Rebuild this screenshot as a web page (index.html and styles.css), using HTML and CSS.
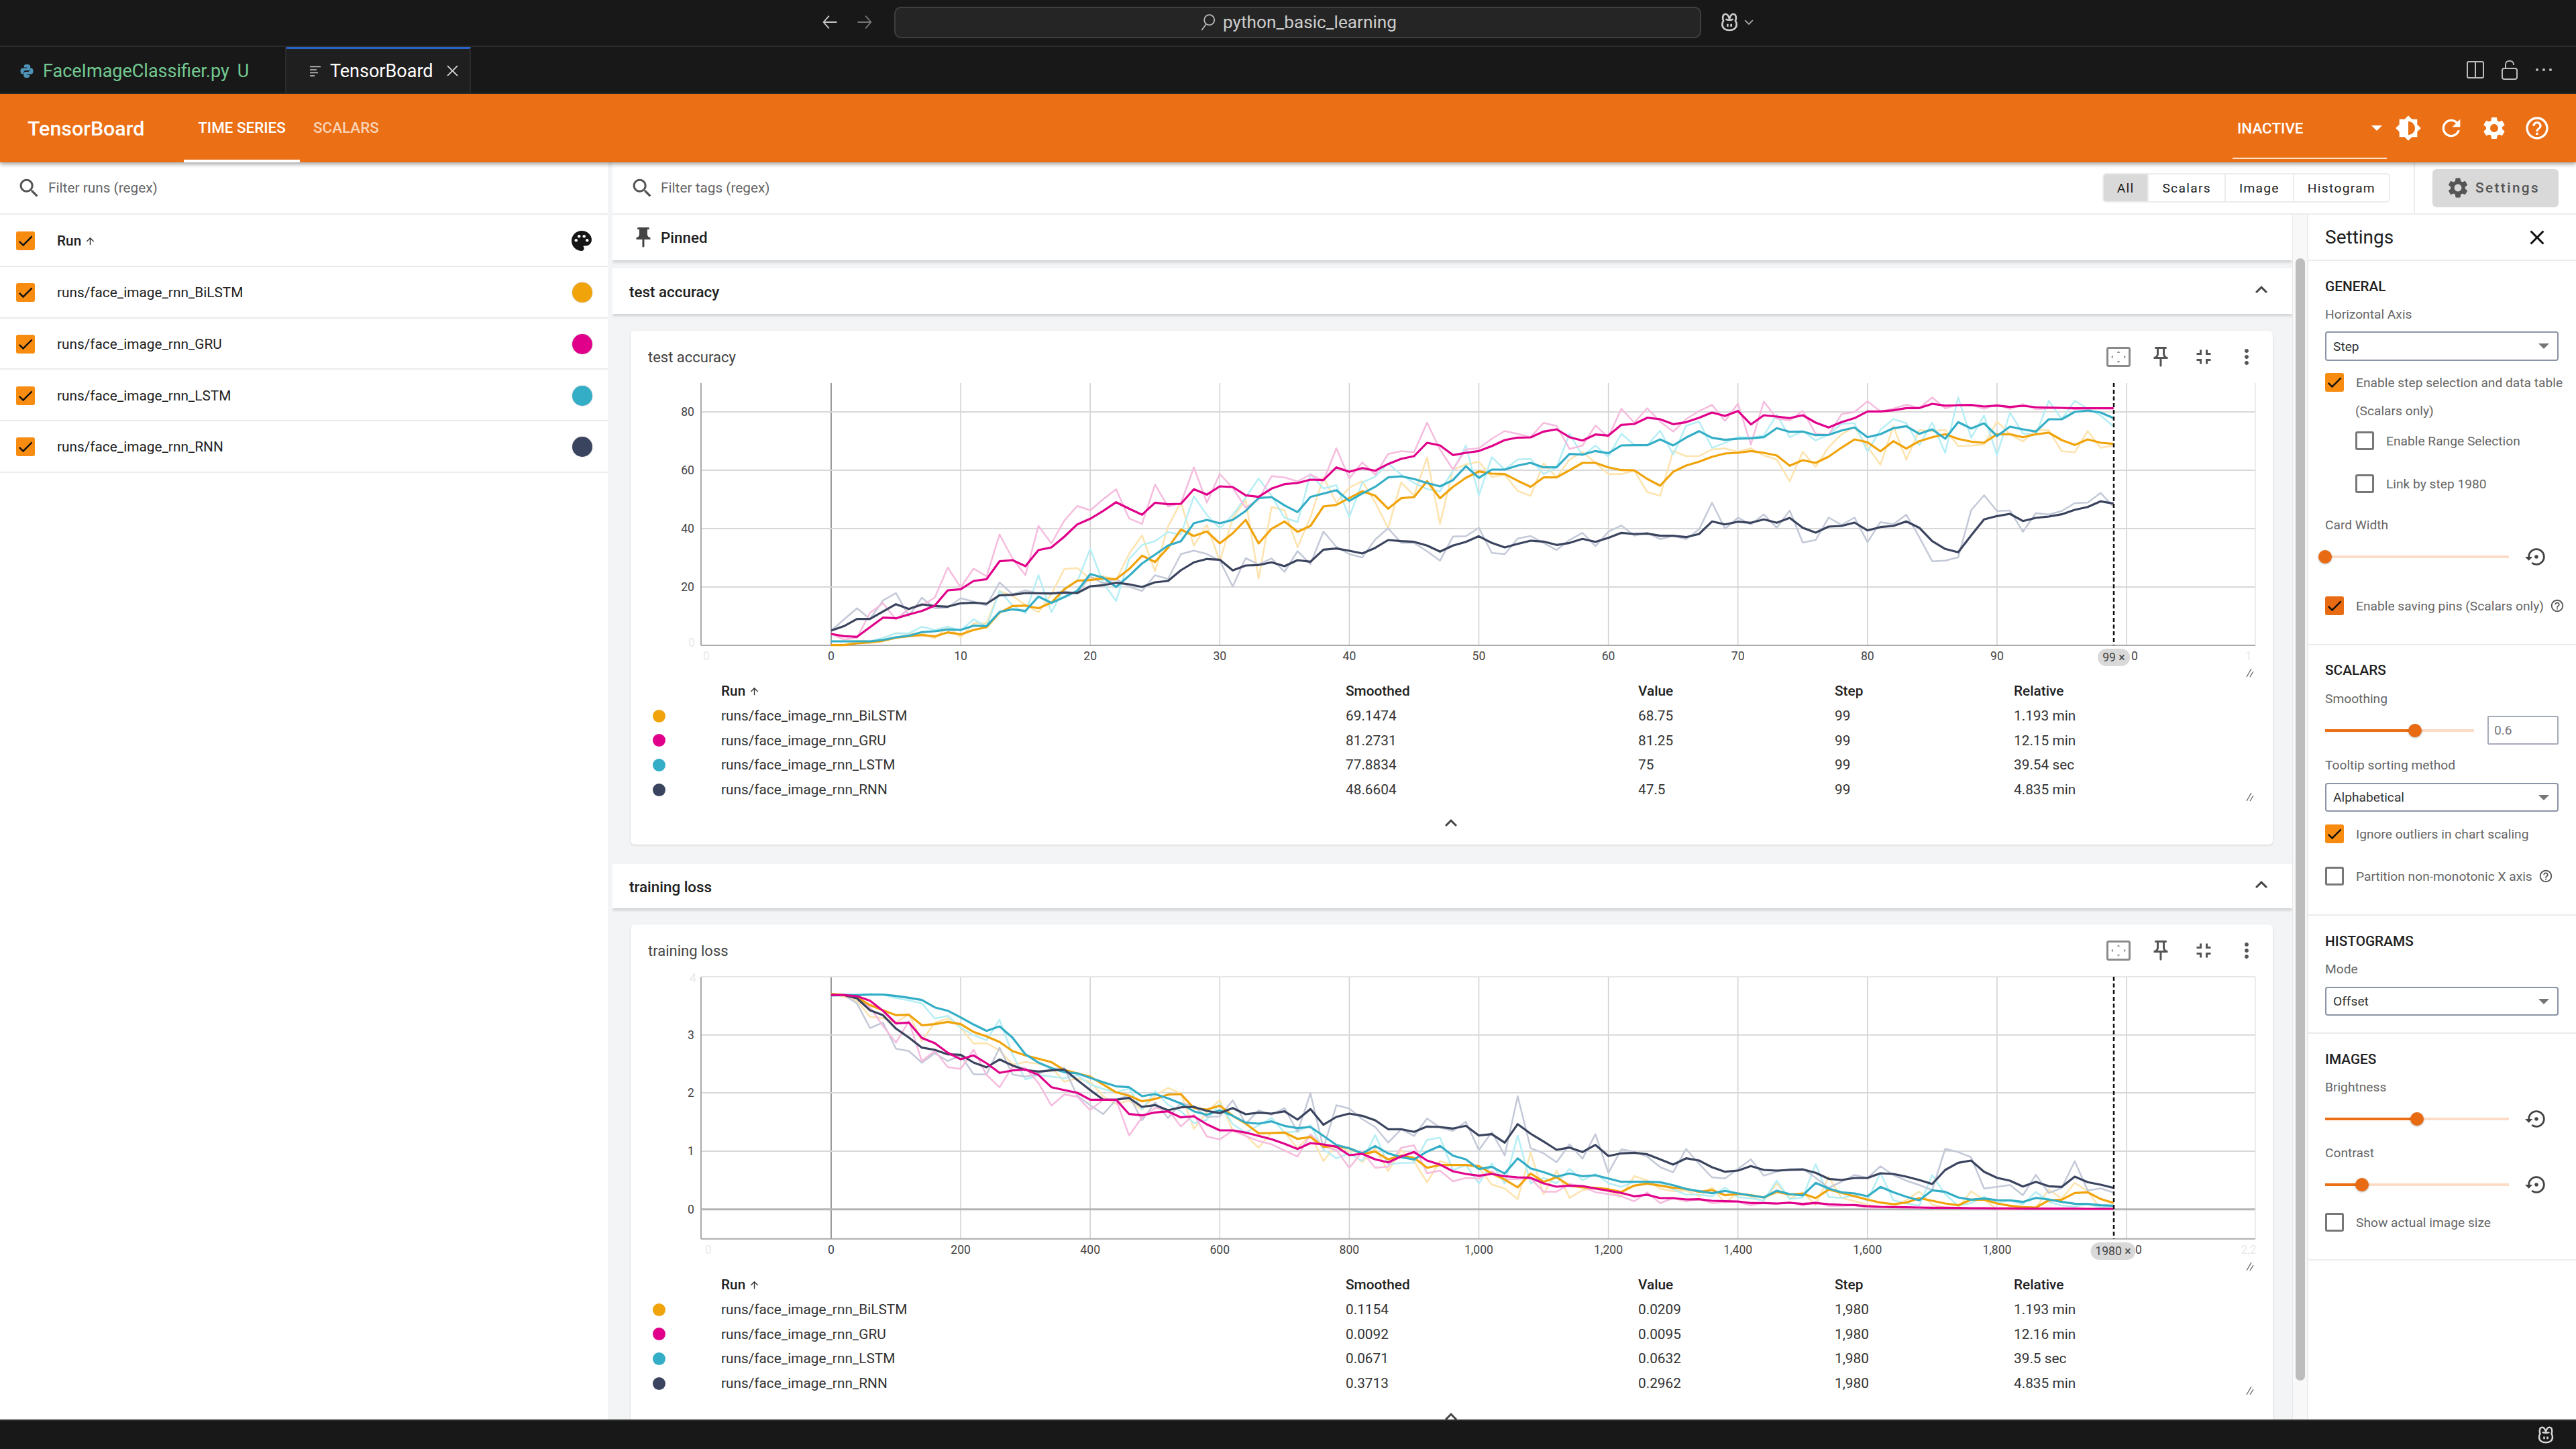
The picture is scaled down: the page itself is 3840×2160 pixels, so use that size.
FILE: index.html
```html
<!DOCTYPE html>
<html>
<head>
    <meta charset="utf-8">
    <title>TensorBoard</title>
    <link rel="stylesheet" href="styles.css">
</head>
<body>
    <svg class="defs" width="0" height="0">
        <symbol id="i-search" viewBox="0 0 24 24"><path d="M15.5 14h-.79l-.28-.27C15.41 12.59 16 11.11 16 9.5 16 5.91 13.09 3 9.5 3S3 5.91 3 9.5 5.91 16 9.5 16c1.61 0 3.09-.59 4.23-1.57l.27.28v.79l5 4.99L20.49 19l-4.99-5zm-6 0C7.01 14 5 11.99 5 9.5S7.01 5 9.5 5 14 7.01 14 9.5 11.99 14 9.5 14z"/></symbol>
        <symbol id="i-gear" viewBox="0 0 24 24"><path d="M19.14 12.94c.04-.3.06-.61.06-.94 0-.32-.02-.64-.07-.94l2.03-1.58c.18-.14.23-.41.12-.61l-1.92-3.32c-.12-.22-.37-.29-.59-.22l-2.39.96c-.5-.38-1.03-.7-1.62-.94l-.36-2.54c-.04-.24-.24-.41-.48-.41h-3.84c-.24 0-.43.17-.47.41l-.36 2.54c-.59.24-1.13.57-1.62.94l-2.39-.96c-.22-.08-.47 0-.59.22L2.74 8.87c-.12.21-.08.47.12.61l2.03 1.58c-.05.3-.09.63-.09.94s.02.64.07.94l-2.03 1.58c-.18.14-.23.41-.12.61l1.92 3.32c.12.22.37.29.59.22l2.39-.96c.5.38 1.03.7 1.62.94l.36 2.54c.05.24.24.41.48.41h3.84c.24 0 .44-.17.47-.41l.36-2.54c.59-.24 1.13-.56 1.62-.94l2.39.96c.22.08.47 0 .59-.22l1.92-3.32c.12-.22.07-.47-.12-.61l-2.01-1.58zM12 15.6c-1.98 0-3.6-1.62-3.6-3.6s1.62-3.6 3.6-3.6 3.6 1.62 3.6 3.6-1.62 3.6-3.6 3.6z"/></symbol>
        <symbol id="i-help" viewBox="0 0 24 24"><path d="M11 18h2v-2h-2v2zm1-16C6.48 2 2 6.48 2 12s4.48 10 10 10 10-4.48 10-10S17.52 2 12 2zm0 18c-4.41 0-8-3.59-8-8s3.59-8 8-8 8 3.59 8 8-3.59 8-8 8zm0-14c-2.21 0-4 1.79-4 4h2c0-1.1.9-2 2-2s2 .9 2 2c0 2-3 1.75-3 5h2c0-2.25 3-2.5 3-5 0-2.21-1.79-4-4-4z"/></symbol>
        <symbol id="i-refresh" viewBox="0 0 24 24"><path d="M17.65 6.35C16.2 4.9 14.21 4 12 4c-4.42 0-7.99 3.58-7.99 8s3.57 8 7.99 8c3.73 0 6.84-2.55 7.73-6h-2.08c-.82 2.33-3.04 4-5.65 4-3.31 0-6-2.69-6-6s2.69-6 6-6c1.66 0 3.14.69 4.22 1.78L13 11h7V4l-2.35 2.35z"/></symbol>
        <symbol id="i-theme" viewBox="0 0 24 24"><path d="M20 15.31L23.31 12 20 8.69V4h-4.69L12 .69 8.69 4H4v4.69L.69 12 4 15.31V20h4.69L12 23.31 15.31 20H20v-4.69zM12 18V6c3.31 0 6 2.69 6 6s-2.69 6-6 6z"/></symbol>
        <symbol id="i-palette" viewBox="0 0 24 24"><path d="M12 2C6.49 2 2 6.49 2 12s4.49 10 10 10c1.38 0 2.5-1.12 2.5-2.5 0-.61-.23-1.2-.64-1.67-.08-.1-.13-.21-.13-.33 0-.28.22-.5.5-.5H16c3.31 0 6-2.69 6-6 0-4.96-4.49-9-10-9zM6.5 13c-.83 0-1.5-.67-1.5-1.5S5.67 10 6.5 10s1.5.67 1.5 1.5S7.33 13 6.5 13zm3-4C8.67 9 8 8.33 8 7.5S8.67 6 9.5 6s1.5.67 1.5 1.5S10.33 9 9.5 9zm5 0c-.83 0-1.5-.67-1.5-1.5S13.67 6 14.5 6s1.5.67 1.5 1.5S15.33 9 14.5 9zm3 4c-.83 0-1.5-.67-1.5-1.5s.67-1.5 1.5-1.5 1.5.67 1.5 1.5-.67 1.5-1.5 1.5z"/></symbol>
        <symbol id="i-pin" viewBox="0 0 24 24"><path d="M16 9V4h1c.55 0 1-.45 1-1s-.45-1-1-1H7c-.55 0-1 .45-1 1s.45 1 1 1h1v5c0 1.66-1.34 3-3 3v2h5.97v7l1 1 1-1v-7H19v-2c-1.66 0-3-1.34-3-3z"/></symbol>
        <symbol id="i-pin-line" viewBox="0 0 24 24"><path d="M14 4v5c0 1.12.37 2.16 1 3H9c.65-.86 1-1.9 1-3V4h4m3-2H7c-.55 0-1 .45-1 1s.45 1 1 1h1v5c0 1.66-1.34 3-3 3v2h5.97v7l1 1 1-1v-7H19v-2c-1.66 0-3-1.34-3-3V4h1c.55 0 1-.45 1-1s-.45-1-1-1z"/></symbol>
        <symbol id="i-reset" viewBox="0 0 24 24"><path d="M14 12c0-1.1-.9-2-2-2s-2 .9-2 2 .9 2 2 2 2-.9 2-2zm-2-9c-4.97 0-9 4.03-9 9H0l4 4 4-4H5c0-3.87 3.13-7 7-7s7 3.13 7 7-3.13 7-7 7c-1.51 0-2.91-.49-4.06-1.3l-1.42 1.44C8.04 20.3 9.94 21 12 21c4.97 0 9-4.03 9-9s-4.03-9-9-9z"/></symbol>
        <symbol id="i-close" viewBox="0 0 24 24"><path d="M19 6.41L17.59 5 12 10.59 6.41 5 5 6.41 10.59 12 5 17.59 6.41 19 12 13.41 17.59 19 19 17.59 13.41 12 19 6.41z"/></symbol>
        <symbol id="i-up" viewBox="0 0 24 24"><path d="M12 8l-6 6 1.41 1.41L12 10.83l4.59 4.58L18 14z"/></symbol>
        <symbol id="i-more" viewBox="0 0 24 24"><path d="M12 8c1.1 0 2-.9 2-2s-.9-2-2-2-2 .9-2 2 .9 2 2 2zm0 2c-1.1 0-2 .9-2 2s.9 2 2 2 2-.9 2-2-.9-2-2-2zm0 6c-1.1 0-2 .9-2 2s.9 2 2 2 2-.9 2-2-.9-2-2-2z"/></symbol>
        <symbol id="i-collapse" viewBox="0 0 24 24"><path d="M5 16h3v3h2v-5H5v2zm3-8H5v2h5V5H8v3zm6 11h2v-3h3v-2h-5v5zm2-11V5h-2v5h5V8h-3z"/></symbol>
        <symbol id="i-fit" viewBox="0 0 36 30"><rect x="1.5" y="1.5" width="33" height="27" rx="2" fill="none" stroke="#8a8a8a" stroke-width="3"/><path d="M18 6l2.5 3h-5zM18 24l2.5-3h-5zM7 15l3-2.5v5zM29 15l-3-2.5v5z" fill="#999"/></symbol>
        <symbol id="i-arrow" viewBox="0 0 24 24"><path d="M4 12l1.41 1.41L11 7.83V20h2V7.83l5.58 5.59L20 12l-8-8-8 8z"/></symbol>
        <symbol id="i-check" viewBox="0 0 24 24"><path d="M9 16.17L4.83 12l-1.42 1.41L9 19 21 7l-1.41-1.41z"/></symbol>
        <symbol id="i-copilot" viewBox="0 0 24 24"><path d="M12 8.5C11 4.5 9.8 3 7.8 3 5.5 3 4.6 5 4.6 7.5c0 1.2.3 2.2.7 3C4.400 11.800 4 13 4 14.500 4 18.800 7.500 21 12 21s8-2.200 8-6.500c0-1.500-.4-2.700-1.300-4 .4-.8.700-1.800.700-3C19.400 5 18.500 3 16.200 3 14.200 3 13 4.500 12 8.500z" fill="none" stroke="currentColor" stroke-width="2"/><path d="M8 8.500c1 1.500 7 1.500 8 0M10 14v3M14 14v3" fill="none" stroke="currentColor" stroke-width="2"/></symbol>
    </svg>

    <header class="titlebar">
        <svg class="nav-arrow" viewBox="0 0 24 24"><path d="M21 12H4M11 4l-7 8 7 8"/></svg>
        <svg class="nav-arrow dim" viewBox="0 0 24 24"><path d="M3 12h17M13 4l7 8-7 8"/></svg>
        <div class="omnibox">
            <svg class="omni-glass" viewBox="0 0 24 24"><circle cx="14.500" cy="9" r="7"/><path d="M10 15l-6 8"/></svg>
            <span>python_basic_learning</span>
        </div>
        <svg class="copilot-top"><use href="#i-copilot"/></svg>
        <svg class="copilot-caret" viewBox="0 0 12 8"><path d="M1 1.500l5 5 5-5"/></svg>
    </header>

    <div class="tabbar">
        <div class="tab">
            <svg class="py-icon" viewBox="0 0 20 20"><path d="M9.600 1C6.600 1 6.300 2.300 6.300 3.400V5h4v.8H4.400C2.700 5.800 1.300 7 1.300 9.800c0 2.800 1.200 4.200 2.900 4.200h1.400v-2c0-1.700 1.400-3 3.100-3h3.500c1.400 0 2.500-1.100 2.500-2.500V3.400C14.700 2 13.400 1 10.800 1z"/><path d="M10.400 19c3 0 3.300-1.300 3.300-2.400V15h-4v-.8h5.900c1.700 0 3.100-1.200 3.100-4 0-2.800-1.200-4.200-2.900-4.200h-1.400v2c0 1.700-1.400 3-3.100 3H8.300c-1.400 0-2.500 1.100-2.500 2.500v3.100C5.800 18 7.100 19 9.700 19z"/></svg>
            <span class="tab-py">FaceImageClassifier.py</span>
            <span class="tab-u">U</span>
        </div>
        <div class="tab tab-active">
            <svg class="preview-icon" viewBox="0 0 16 16"><path d="M0 1.500h16M0 6h10M0 10.500h12M0 15h7"/></svg>
            <span>TensorBoard</span>
            <svg class="tab-x" viewBox="0 0 16 16"><path d="M1 1l14 14M15 1L1 15"/></svg>
        </div>
        <div class="tab-actions">
            <svg class="act split" viewBox="0 0 26 26"><rect x="1" y="1" width="24" height="24" rx="2"/><path d="M13 1v24"/></svg>
            <svg class="act lock" viewBox="0 0 24 30"><rect x="1" y="13" width="22" height="16" rx="3"/><path d="M6 13V7c0-7 12-7 12 0v1"/></svg>
            <div class="dots"><i></i><i></i><i></i></div>
        </div>
    </div>

    <nav class="topnav">
        <div class="brand">TensorBoard</div>
        <div class="nav-tab nav-on">TIME SERIES</div>
        <div class="nav-tab">SCALARS</div>
        <div class="nav-right">
            <div class="plugin-select"><span>INACTIVE</span><i class="plugin-caret"></i></div>
            <svg class="nav-icon"><use href="#i-theme"/></svg>
            <svg class="nav-icon"><use href="#i-refresh"/></svg>
            <svg class="nav-icon"><use href="#i-gear"/></svg>
            <svg class="nav-icon"><use href="#i-help"/></svg>
        </div>
    </nav>

    <div class="content">
        <aside class="sidebar">
            <div class="filter-row">
                <svg class="filter-icon"><use href="#i-search"/></svg>
                <span>Filter runs (regex)</span>
            </div>
            <div class="run-row run-head">
                <span class="check on"><svg><use href="#i-check"/></svg></span>
                <span class="run-name">Run <svg class="sort-arrow"><use href="#i-arrow"/></svg></span>
                <svg class="palette"><use href="#i-palette"/></svg>
            </div>
            <div class="run-row">
                <span class="check on"><svg><use href="#i-check"/></svg></span>
                <span class="run-name">runs/face_image_rnn_BiLSTM</span>
                <i class="run-color c-orange"></i>
            </div>
            <div class="run-row">
                <span class="check on"><svg><use href="#i-check"/></svg></span>
                <span class="run-name">runs/face_image_rnn_GRU</span>
                <i class="run-color c-pink"></i>
            </div>
            <div class="run-row">
                <span class="check on"><svg><use href="#i-check"/></svg></span>
                <span class="run-name">runs/face_image_rnn_LSTM</span>
                <i class="run-color c-teal"></i>
            </div>
            <div class="run-row">
                <span class="check on"><svg><use href="#i-check"/></svg></span>
                <span class="run-name">runs/face_image_rnn_RNN</span>
                <i class="run-color c-navy"></i>
            </div>
        </aside>

        <main class="main">
            <div class="toolbar">
                <svg class="filter-icon"><use href="#i-search"/></svg>
                <span class="tag-filter">Filter tags (regex)</span>
                <div class="type-group">
                    <div class="type-btn type-on">All</div>
                    <div class="type-btn">Scalars</div>
                    <div class="type-btn">Image</div>
                    <div class="type-btn">Histogram</div>
                </div>
                <div class="toolbar-sep"></div>
                <div class="settings-btn"><svg><use href="#i-gear"/></svg><span>Settings</span></div>
            </div>

            <div class="main-body">
                <div class="cards">
                    <div class="pinned">
                        <svg class="pinned-icon"><use href="#i-pin"/></svg>
                        <span>Pinned</span>
                    </div>

                    <div class="group-head first-group">
                        <span>test accuracy</span>
                        <svg class="chev"><use href="#i-up"/></svg>
                    </div>
                    <section class="card">
                        <div class="card-head">
                            <span class="card-title">test accuracy</span>
                            <svg class="card-fit"><use href="#i-fit"/></svg>
                            <svg class="card-icon"><use href="#i-pin-line"/></svg>
                            <svg class="card-icon"><use href="#i-collapse"/></svg>
                            <svg class="card-icon"><use href="#i-more"/></svg>
                        </div>
                        <svg class="chart" id="chart-accuracy"></svg>
                        <svg class="resize r-chart" viewBox="0 0 12 14"><path d="M1 13L8 1M6 13L11 5"/></svg>
                        <div class="data-table">
                            <b></b><b>Run <svg class="sort-arrow"><use href="#i-arrow"/></svg></b><b>Smoothed</b><b>Value</b><b>Step</b><b>Relative</b>
                            <i class="dot c-orange"></i><span>runs/face_image_rnn_BiLSTM</span><span>69.1474</span><span>68.75</span><span>99</span><span>1.193 min</span>
                            <i class="dot c-pink"></i><span>runs/face_image_rnn_GRU</span><span>81.2731</span><span>81.25</span><span>99</span><span>12.15 min</span>
                            <i class="dot c-teal"></i><span>runs/face_image_rnn_LSTM</span><span>77.8834</span><span>75</span><span>99</span><span>39.54 sec</span>
                            <i class="dot c-navy"></i><span>runs/face_image_rnn_RNN</span><span>48.6604</span><span>47.5</span><span>99</span><span>4.835 min</span>
                        </div>
                        <svg class="resize r-table" viewBox="0 0 12 14"><path d="M1 13L8 1M6 13L11 5"/></svg>
                        <svg class="expand"><use href="#i-up"/></svg>
                    </section>

                    <div class="group-head second-group">
                        <span>training loss</span>
                        <svg class="chev"><use href="#i-up"/></svg>
                    </div>
                    <section class="card">
                        <div class="card-head">
                            <span class="card-title">training loss</span>
                            <svg class="card-fit"><use href="#i-fit"/></svg>
                            <svg class="card-icon"><use href="#i-pin-line"/></svg>
                            <svg class="card-icon"><use href="#i-collapse"/></svg>
                            <svg class="card-icon"><use href="#i-more"/></svg>
                        </div>
                        <svg class="chart" id="chart-loss"></svg>
                        <svg class="resize r-chart" viewBox="0 0 12 14"><path d="M1 13L8 1M6 13L11 5"/></svg>
                        <div class="data-table">
                            <b></b><b>Run <svg class="sort-arrow"><use href="#i-arrow"/></svg></b><b>Smoothed</b><b>Value</b><b>Step</b><b>Relative</b>
                            <i class="dot c-orange"></i><span>runs/face_image_rnn_BiLSTM</span><span>0.1154</span><span>0.0209</span><span>1,980</span><span>1.193 min</span>
                            <i class="dot c-pink"></i><span>runs/face_image_rnn_GRU</span><span>0.0092</span><span>0.0095</span><span>1,980</span><span>12.16 min</span>
                            <i class="dot c-teal"></i><span>runs/face_image_rnn_LSTM</span><span>0.0671</span><span>0.0632</span><span>1,980</span><span>39.5 sec</span>
                            <i class="dot c-navy"></i><span>runs/face_image_rnn_RNN</span><span>0.3713</span><span>0.2962</span><span>1,980</span><span>4.835 min</span>
                        </div>
                        <svg class="resize r-table" viewBox="0 0 12 14"><path d="M1 13L8 1M6 13L11 5"/></svg>
                        <svg class="expand"><use href="#i-up"/></svg>
                    </section>
                </div>

                <div class="scrollbar"><div class="thumb"></div></div>

                <aside class="settings">
                    <div class="settings-head">
                        <span>Settings</span>
                        <svg><use href="#i-close"/></svg>
                    </div>

                    <div class="set-section sec-general">
                        <h3>GENERAL</h3>
                        <div class="set-label mt18">Horizontal Axis</div>
                        <div class="select mt13"><span>Step</span><i></i></div>
                        <div class="check-row mt18"><span class="check on"><svg><use href="#i-check"/></svg></span><span>Enable step selection and data table</span></div>
                        <div class="set-label mt17 sub">(Scalars only)</div>
                        <div class="check-row mt18 sub"><span class="check"></span><span>Enable Range Selection</span></div>
                        <div class="check-row mt36 sub"><span class="check"></span><span>Link by step 1980</span></div>
                        <div class="set-label mt36">Card Width</div>
                        <div class="slider-row mt15">
                            <div class="slider"><div class="fill" style="width:0%"></div><div class="knob" style="left:0%"></div></div>
                            <svg class="reset"><use href="#i-reset"/></svg>
                        </div>
                        <div class="check-row mt39"><span class="check on deep"><svg><use href="#i-check"/></svg></span><span>Enable saving pins (Scalars only)</span><svg class="help"><use href="#i-help"/></svg></div>
                    </div>

                    <div class="set-section sec-scalars">
                        <h3>SCALARS</h3>
                        <div class="set-label mt19">Smoothing</div>
                        <div class="slider-row smooth-row mt13">
                            <div class="slider short"><div class="fill" style="width:60.400%"></div><div class="knob" style="left:60.400%"></div></div>
                            <div class="num-input">0.6</div>
                        </div>
                        <div class="set-label mt19">Tooltip sorting method</div>
                        <div class="select mt14 low"><span>Alphabetical</span><i></i></div>
                        <div class="check-row mt19"><span class="check on"><svg><use href="#i-check"/></svg></span><span>Ignore outliers in chart scaling</span></div>
                        <div class="check-row mt35"><span class="check"></span><span>Partition non-monotonic X axis</span><svg class="help"><use href="#i-help"/></svg></div>
                    </div>

                    <div class="set-section sec-hist">
                        <h3>HISTOGRAMS</h3>
                        <div class="set-label mt18">Mode</div>
                        <div class="select mt14 low"><span>Offset</span><i></i></div>
                    </div>

                    <div class="set-section sec-images">
                        <h3>IMAGES</h3>
                        <div class="set-label mt18">Brightness</div>
                        <div class="slider-row mt15">
                            <div class="slider"><div class="fill" style="width:50%"></div><div class="knob" style="left:50%"></div></div>
                            <svg class="reset"><use href="#i-reset"/></svg>
                        </div>
                        <div class="set-label mt19">Contrast</div>
                        <div class="slider-row mt15">
                            <div class="slider"><div class="fill" style="width:20%"></div><div class="knob" style="left:20%"></div></div>
                            <svg class="reset"><use href="#i-reset"/></svg>
                        </div>
                        <div class="check-row mt22"><span class="check"></span><span>Show actual image size</span></div>
                    </div>
                </aside>
            </div>
        </main>
    </div>

    <footer class="statusbar">
        <svg class="copilot-bottom"><use href="#i-copilot"/></svg>
    </footer>

    <script src="charts.js"></script>
</body>
</html>
```

FILE: styles.css
```css
* {
    box-sizing: border-box;
}

html, body {
    margin: 0;
    height: 2160px;
    overflow: hidden;
}

body {
    display: flex;
    flex-direction: column;
    font-family: Roboto, "Liberation Sans", sans-serif;
    font-size: 20.8px;
    color: #212121;
    background: #181818;
}

.defs {
    position: absolute;
}

/* editor chrome */
.titlebar {
    height: 70px;
    flex: none;
    display: flex;
    align-items: center;
    padding: 0 0 2px 1223px;
    background: #181818;
    border-bottom: 2px solid #2b2b2b;
}

.nav-arrow {
    width: 28px;
    height: 28px;
    margin-right: 24px;
    fill: none;
    stroke: #c8c8c8;
    stroke-width: 1.6;
}

.nav-arrow.dim {
    stroke: #777;
    margin-right: 30px;
}

.omnibox {
    width: 1203px;
    height: 47px;
    display: flex;
    align-items: center;
    justify-content: center;
    gap: 10px;
    background: #252525;
    border: 2px solid #3f3f3f;
    border-radius: 10px;
    color: #cccccc;
    font-size: 26.200px;
}

.omni-glass {
    width: 26px;
    height: 26px;
    fill: none;
    stroke: #bbb;
    stroke-width: 1.6;
}

.copilot-top {
    width: 32px;
    height: 32px;
    margin-left: 26px;
    color: #ccc;
}

.copilot-caret {
    width: 14px;
    height: 10px;
    margin-left: 6px;
    fill: none;
    stroke: #aaa;
    stroke-width: 1.5;
}

.tabbar {
    height: 70px;
    flex: none;
    display: flex;
    background: #181818;
    border-bottom: 2px solid #2b2b2b;
}

.tab {
    display: flex;
    align-items: center;
    height: 68px;
    width: 427px;
    padding: 3px 0 0 29px;
    font-size: 27px;
    border-right: 2px solid #2b2b2b;
}

.py-icon {
    width: 22px;
    height: 22px;
    fill: #4f93b8;
    margin-right: 13px;
}

.tab-py {
    color: #73c991;
}

.tab-u {
    color: #73c991;
    margin-left: 12px;
}

.tab-active {
    width: 275px;
    padding: 0 0 0 35px;
    background: #1f1f1f;
    color: #fff;
    border-top: 3px solid #2a62c9;
}

.preview-icon {
    width: 16px;
    height: 18px;
    margin-right: 14px;
    fill: none;
    stroke: #ccc;
    stroke-width: 1.6;
}

.tab-x {
    width: 17px;
    height: 17px;
    margin-left: 20px;
    fill: none;
    stroke: #ddd;
    stroke-width: 1.6;
}

.tab-actions {
    margin-left: auto;
    display: flex;
    align-items: center;
    padding-right: 36px;
}

.act {
    fill: none;
    stroke: #bdbdbd;
    stroke-width: 2;
}

.split {
    width: 26px;
    height: 26px;
    margin-right: 26px;
}

.lock {
    width: 24px;
    height: 30px;
    margin-right: 27px;
}

.dots {
    display: flex;
    gap: 6px;
}

.dots i {
    width: 4px;
    height: 4px;
    border-radius: 50%;
    background: #bdbdbd;
}

/* tensorboard top bar */
.topnav {
    height: 102px;
    flex: none;
    display: flex;
    align-items: stretch;
    background: #eb6f15;
    color: #fff;
    box-shadow: 0 3px 6px rgba(0, 0, 0, 0.35);
    position: relative;
    z-index: 2;
}

.brand {
    width: 274px;
    padding-left: 41px;
    display: flex;
    align-items: center;
    font-size: 30.400px;
    font-weight: 500;
}

.nav-tab {
    width: 173px;
    display: flex;
    align-items: center;
    justify-content: center;
    font-size: 22.400px;
    font-weight: 500;
    color: rgba(255, 255, 255, 0.7);
    border-bottom: 4px solid transparent;
    padding-top: 1px;
}

.nav-tab + .nav-tab {
    width: auto;
    padding-left: 20px;
}

.nav-on {
    color: #fff;
    border-bottom-color: #fff;
}

.nav-right {
    margin-left: auto;
    display: flex;
    align-items: center;
    padding-right: 38px;
}

.plugin-select {
    align-self: flex-start;
    width: 230px;
    height: 97px;
    margin-right: 12px;
    padding: 7px 7px 0;
    display: flex;
    align-items: center;
    font-size: 22.400px;
    font-weight: 500;
    border-bottom: 2px solid rgba(255, 255, 255, 0.8);
}

.plugin-caret {
    margin-left: auto;
    border: 8px solid transparent;
    border-top: 8px solid #fff;
    border-bottom: 0;
}

.nav-icon {
    width: 40px;
    height: 40px;
    fill: #fff;
    margin-right: 24px;
}

.nav-icon:last-child {
    margin-right: 0;
}

/* layout below the bar */
.content {
    flex: 1;
    min-height: 0;
    display: flex;
    background: #f3f4f6;
}

.sidebar {
    width: 906px;
    flex: none;
    background: #fff;
    margin-right: 7px;
}

.filter-row {
    height: 78px;
    display: flex;
    align-items: center;
    padding-left: 25px;
    gap: 10px;
    color: #666;
    font-size: 20.8px;
    border-bottom: 2px solid #ececec;
}

.filter-icon {
    width: 37px;
    height: 37px;
    flex: none;
    fill: #555;
}

.run-row {
    height: 76.700px;
    display: flex;
    align-items: center;
    padding: 2px 24px 0;
    border-bottom: 2px solid #ececec;
}

.run-head {
    height: 78px;
    font-weight: 500;
}

.check {
    width: 28px;
    height: 28px;
    flex: none;
    display: block;
    border: 3px solid #777;
    border-radius: 3px;
    background: #fff;
}

.check.on {
    background: #f78c11;
    border: 0;
}

.check.deep {
    background: #e86a12;
}

.check svg {
    display: block;
    width: 28px;
    height: 28px;
    fill: #111;
}

.run-name {
    margin-left: 33px;
    display: flex;
    align-items: center;
}

.sort-arrow {
    width: 17px;
    height: 17px;
    margin-left: 5px;
    fill: #333;
}

.palette {
    width: 36px;
    height: 36px;
    margin-left: auto;
    margin-right: -3px;
    fill: #151515;
}

.run-color {
    width: 30px;
    height: 30px;
    margin-left: auto;
    margin-right: -1px;
    border-radius: 50%;
    box-shadow: 0 0 2px rgba(0, 0, 0, 0.3);
}

.c-orange { background: #f0a30a; }
.c-pink { background: #e0008a; }
.c-teal { background: #33aec6; }
.c-navy { background: #3a445e; }

.main {
    flex: 1;
    min-width: 0;
    display: flex;
    flex-direction: column;
}

.toolbar {
    height: 78px;
    flex: none;
    display: flex;
    align-items: center;
    padding: 0 26px 0 26px;
    background: #fff;
    border-bottom: 2px solid #ececec;
}

.tag-filter {
    margin-left: 9px;
    color: #666;
}

.type-group {
    margin-left: auto;
    display: flex;
    height: 44px;
    border: 2px solid #ececec;
    border-radius: 6px;
    font-size: 19.200px;
    letter-spacing: 1.300px;
    overflow: hidden;
}

.type-btn {
    padding: 0 20px;
    display: flex;
    align-items: center;
    border-left: 2px solid #ececec;
}

.type-btn:first-child {
    border-left: 0;
}

.type-on {
    background: #d9d9d9;
}

.toolbar-sep {
    width: 2px;
    height: 78px;
    margin: 0 26px 0 35px;
    background: #ececec;
}

.settings-btn {
    width: 188px;
    height: 57px;
    display: flex;
    align-items: center;
    padding-left: 20px;
    gap: 8px;
    background: #d9d9d9;
    border-radius: 6px;
    color: #555;
    font-size: 20.8px;
    letter-spacing: 2.400px;
    font-weight: 500;
}

.settings-btn svg {
    width: 36px;
    height: 36px;
    fill: #555;
}

.main-body {
    flex: 1;
    min-height: 0;
    display: flex;
}

/* scrolled column of cards */
.cards {
    width: 2504px;
    flex: none;
    overflow: hidden;
}

.pinned {
    height: 68px;
    display: flex;
    align-items: center;
    padding-left: 28px;
    background: #fff;
    font-size: 22.400px;
    font-weight: 500;
    box-shadow: 0 3px 4px rgba(0, 0, 0, 0.15);
}

.pinned-icon {
    width: 36px;
    height: 36px;
    fill: #444;
    margin-right: 8px;
}

.group-head {
    display: flex;
    align-items: center;
    justify-content: space-between;
    padding: 0 25px;
    background: #fff;
    font-size: 22.400px;
    font-weight: 500;
    box-shadow: 0 3px 4px rgba(0, 0, 0, 0.15);
}

.group-head span {
    margin-top: 2px;
}

.first-group {
    height: 68px;
    margin-top: 12px;
}

.second-group {
    height: 66px;
    margin-top: 29px;
}

.chev {
    width: 36px;
    height: 36px;
    fill: #444;
    margin: -4px 3px 0 0;
}

.card {
    position: relative;
    width: 2448px;
    height: 766px;
    margin: 25px 0 0 27px;
    background: #fff;
    border-radius: 6px;
    box-shadow: 0 1px 3px rgba(0, 0, 0, 0.14);
}

.second-group + .card {
    margin-top: 24px;
}

.card-head {
    height: 70px;
    display: flex;
    align-items: center;
    padding: 8px 21px 0 26px;
}

.card-title {
    margin-right: auto;
    color: #444;
    font-size: 22px;
}

.card-fit {
    width: 36px;
    height: 30px;
    margin-right: 27px;
}

.card-icon {
    width: 36px;
    height: 36px;
    margin-right: 28px;
    fill: #555;
}

.card-icon:last-child {
    margin-right: 0;
}

.chart {
    display: block;
    width: 2448px;
    height: 440px;
}

.chart text {
    font-family: Roboto, sans-serif;
    font-size: 17.600px;
    fill: #444;
}

.data-table {
    display: grid;
    grid-template-columns: 135px 931px 436px 293px 267px 1fr;
    grid-auto-rows: 36.700px;
    align-items: center;
    margin-top: 9px;
    font-size: 20.8px;
    color: #333;
}

.data-table b {
    display: flex;
    align-items: center;
    font-weight: 500;
    color: #212121;
}

.dot {
    width: 19px;
    height: 19px;
    margin-left: 33px;
    border-radius: 50%;
}

.resize {
    position: absolute;
    right: 28px;
    width: 12px;
    height: 14px;
    fill: none;
    stroke: #555;
    stroke-width: 1.2;
}

.r-chart {
    top: 503px;
}

.r-table {
    top: 688px;
}

.expand {
    position: absolute;
    left: 1205px;
    top: 716px;
    width: 36px;
    height: 36px;
    fill: #444;
}

/* settings column */
.scrollbar {
    width: 22px;
    flex: none;
    padding: 65px 0 0 4px;
    background: #f8f8f8;
    border-left: 1px solid #e8e8e8;
}

.thumb {
    width: 14px;
    height: 1673px;
    border-radius: 7px;
    background: #bdbdbd;
}

.settings {
    width: 401px;
    flex: none;
    background: #fff;
    border-left: 2px solid #ececec;
    color: #666;
    font-size: 19.200px;
}

.settings-head {
    height: 69px;
    display: flex;
    align-items: center;
    justify-content: space-between;
    padding: 0 40px 0 25px;
    color: #212121;
    font-size: 28px;
    border-bottom: 2px solid #ececec;
}

.settings-head svg {
    width: 36px;
    height: 36px;
    fill: #111;
}

.set-section {
    padding: 24px 25px 45px;
    border-bottom: 2px solid #ececec;
}

.sec-general { padding-top: 26px; padding-bottom: 43px; }
.sec-scalars { padding-top: 25px; padding-bottom: 43px; }
.sec-hist { padding-top: 26px; padding-bottom: 25px; }
.sec-images { padding-top: 26px; padding-bottom: 41px; }

.set-section h3 {
    margin: 0;
    height: 24px;
    line-height: 24px;
    color: #212121;
    font-size: 20.8px;
    font-weight: 500;
}

.set-label {
    height: 24px;
    line-height: 24px;
}

.sub { margin-left: 45px; }
.mt13 { margin-top: 13px; }
.mt14 { margin-top: 14px; }
.mt15 { margin-top: 15px; }
.mt17 { margin-top: 17px; }
.mt18 { margin-top: 18px; }
.mt19 { margin-top: 19px; }
.mt22 { margin-top: 22px; }
.mt35 { margin-top: 35px; }
.mt36 { margin-top: 36px; }
.mt39 { margin-top: 39px; }

.select {
    width: 348px;
    height: 44px;
    display: flex;
    align-items: center;
    justify-content: space-between;
    padding: 0 10px;
    background: #fff;
    border: 2px solid #8b93a6;
    border-radius: 4px;
    color: #333;
}

.select.low {
    height: 43px;
}

.select i {
    border: 8px solid transparent;
    border-top: 8px solid #757575;
    border-bottom: 0;
    margin-right: 2px;
}

.check-row {
    height: 28px;
    display: flex;
    align-items: center;
    gap: 18px;
    white-space: nowrap;
}

.help {
    width: 22px;
    height: 22px;
    flex: none;
    margin-left: -9px;
    fill: #555;
}

.slider-row {
    height: 40px;
    display: flex;
    align-items: center;
}

.smooth-row {
    height: 43px;
    gap: 20px;
}

.slider {
    position: relative;
    width: 274px;
    height: 4px;
    background: #fcdcc7;
}

.slider.short {
    width: 222px;
}

.fill {
    height: 4px;
    background: #eb6f15;
}

.knob {
    position: absolute;
    top: -8px;
    width: 20px;
    height: 20px;
    margin-left: -10px;
    border-radius: 50%;
    background: #e86a12;
    box-shadow: 0 1px 3px rgba(0, 0, 0, 0.3);
}

.reset {
    width: 34px;
    height: 34px;
    margin-left: 24px;
    fill: #444;
}

.num-input {
    width: 106px;
    height: 43px;
    display: flex;
    align-items: center;
    padding-left: 8px;
    border: 2px solid #a5abb8;
    border-radius: 2px;
    color: #777;
}

.statusbar {
    height: 44px;
    flex: none;
    display: flex;
    align-items: center;
    justify-content: flex-end;
    padding-right: 30px;
    background: #181818;
    border-top: 2px solid #2b2b2b;
}

.copilot-bottom {
    width: 30px;
    height: 30px;
    color: #d8d8d8;
}
```

FILE: charts.js
```javascript
// Smoothed curves, one y per step, in plot units (3 units = 1px).
// The faint raw curves are worked back from these with the 0.6 smoothing weight.
const ACCURACY = {
    orange: [1205,1205,1197,1193,1186,1172,1165,1160,1166,1148,1157,1137,1125,1060,1030,1028,1040,1015,955,917,914,907,910,865,805,833,770,688,717,697,750,705,645,750,685,
        652,698,672,585,578,547,517,537,595,548,543,472,548,497,457,428,438,440,470,497,455,455,423,390,390,410,422,423,462,492,430,402,385,363,348,345,337,345,357,403,378,390,362,322,285,298,338,293,326,293,275,262,283,295,300,262,262,275,262,255,288,310,285,300,305],
    teal: [1188,1188,1188,1188,1182,1170,1163,1147,1143,1135,1137,1118,1120,1057,1045,1052,988,1016,990,962,887,903,945,895,840,800,760,740,660,645,660,645,605,547,543,
        580,610,542,527,512,560,527,497,455,450,462,480,495,467,405,457,420,420,402,390,410,410,350,353,337,347,312,311,311,285,312,277,248,278,287,282,280,275,235,251,250,266,265,245,232,275,262,235,226,260,240,282,208,236,213,270,228,240,250,195,195,162,156,165,190],
    navy: [1140,1120,1088,1088,1055,1022,1043,1023,1030,1033,1018,1015,1020,982,980,972,973,974,970,972,942,937,926,933,945,924,918,870,835,820,823,871,849,847,835,
        852,825,832,778,773,783,795,770,735,740,743,760,787,760,743,718,748,768,752,738,742,757,748,730,743,725,703,708,706,716,716,722,708,652,665,653,658,643,658,636,680,702,675,672,657,692,677,672,652,680,740,775,790,715,643,628,618,650,636,630,620,600,587,562,572],
    pink: [1155,1165,1168,1125,1082,1085,1068,1052,1028,960,955,918,910,830,825,852,780,768,720,665,640,605,566,595,622,568,575,573,508,532,495,498,535,542,505,
        485,480,465,467,410,430,413,425,395,372,360,300,312,355,345,337,315,288,277,276,250,240,275,290,263,268,220,216,188,195,217,208,188,165,180,158,218,177,183,190,177,210,232,208,190,160,160,155,145,145,126,134,132,131,138,134,140,135,141,143,144,146,146,146,146]
};

const LOSS = {
    orange: [155,160,170,205,228,250,248,295,290,280,290,325,345,370,410,430,445,460,495,510,525,560,595,610,635,625,605,603,665,672,655,700,735,778,777,775,803,795,838,835,845,870,860,895,878,888,932,
        920,920,920,925,958,985,1020,958,995,975,1012,1020,1022,1028,1040,1012,1003,1012,1022,1027,1040,1032,1055,1050,1055,1065,1040,1052,1048,1068,1030,1045,1060,1075,1088,1095,1088,1068,1080,1092,1100,1075,1075,1092,1102,1108,1110,1078,1075,1045,1042,1072,1090],
    teal: [162,160,160,158,158,164,172,182,215,230,260,292,320,300,350,425,462,487,505,510,530,550,568,572,612,603,622,645,680,695,675,700,730,735,725,745,755,750,790,830,845,868,835,868,885,895,860,
        835,878,895,938,928,958,890,935,952,972,958,970,966,980,995,995,995,997,1010,1027,1037,1046,1036,1047,1056,1065,1035,1050,1056,1000,1025,1042,1047,1060,1018,1042,1062,1078,1033,1040,1065,1075,1070,1077,1078,1085,1067,1074,1085,1093,1094,1100,1102],
    navy: [160,160,175,228,250,310,350,395,405,425,427,462,483,448,475,495,502,497,493,540,585,628,628,620,660,652,675,662,660,678,688,665,693,686,690,680,717,670,740,705,690,700,720,760,760,772,748,
        750,757,745,788,782,820,737,780,815,852,842,862,830,880,868,865,872,895,918,890,900,930,950,945,925,942,945,942,940,955,982,987,978,978,957,960,972,987,1005,942,910,900,950,977,990,1016,995,1015,1018,972,997,1008,1022],
    pink: [160,160,165,185,230,287,283,352,375,418,447,430,465,508,497,493,517,572,585,597,628,628,628,692,698,685,680,707,702,738,765,765,775,790,805,825,848,822,828,838,876,870,895,908,882,862,
        900,918,948,960,968,960,970,975,977,1002,1017,1012,1014,1025,1035,1045,1060,1053,1068,1068,1074,1073,1080,1082,1083,1090,1090,1092,1089,1094,1090,1095,1098,1099,1104,1107,1108,1109,1110,1111,1111,1112,1113,1113,1114,1114,1115,1115,1115,1115,1115,1116,1116,1116]
};

const COLORS = { orange: "#f0a30a", teal: "#33aec6", navy: "#3a445e", pink: "#e0008a" };
const RAW_COLORS = { orange: "#fde3ae", teal: "#b6eef5", navy: "#c4c9d8", pink: "#f5bcde" };
const NS = "http://www.w3.org/2000/svg";

const PLOT = { left: 105, right: 2422, top: 8, x0: 299, stepPx: 19.31, cursor: 2211 };

function add(svg, tag, attrs, text) {
    const el = document.createElementNS(NS, tag);
    for (const k in attrs) el.setAttribute(k, attrs[k]);
    if (text !== undefined) el.textContent = text;
    svg.appendChild(el);
    return el;
}

function hline(svg, y, color, w) {
    add(svg, "line", { x1: PLOT.left, x2: PLOT.right, y1: y, y2: y, stroke: color, "stroke-width": w });
}

function vline(svg, x, y1, y2, color, w) {
    add(svg, "line", { x1: x, x2: x, y1: y1, y2: y2, stroke: color, "stroke-width": w });
}

function poly(svg, ys, shift, color, w) {
    const pts = ys.map((y, i) => (PLOT.x0 + i * PLOT.stepPx).toFixed(1) + "," + (y / 3 + shift).toFixed(1));
    add(svg, "polyline", {
        points: pts.join(" "), fill: "none", stroke: color,
        "stroke-width": w, "stroke-linejoin": "round"
    });
}

function rawFrom(ys) {
    return ys.map((y, i) => i === 0 ? y : (y - 0.6 * ys[i - 1]) / 0.4);
}

function drawChart(id, opt) {
    const svg = document.getElementById(id);
    svg.setAttribute("viewBox", "0 0 2448 440");

    // vertical grid and x labels, the last tick's label sits under the step badge
    opt.xTicks.forEach((label, i) => {
        const x = PLOT.x0 + i * 10 * PLOT.stepPx;
        vline(svg, x, PLOT.top, opt.bottom, i === 0 ? "#999" : "#d0d0d0", i === 0 ? 2 : 1.5);
        if (label) add(svg, "text", { x: x, y: 421, "text-anchor": "middle" }, label);
    });

    // horizontal grid and y labels
    opt.yTicks.forEach(t => {
        hline(svg, t.y, t.zero ? "#b4b4b4" : "#d8d8d8", t.zero ? 3 : 2);
        add(svg, "text", { x: 95, y: t.y + 6, "text-anchor": "end" }, t.label);
    });

    // frame
    vline(svg, PLOT.left, PLOT.top, opt.bottom, "#aaa", 2);
    vline(svg, PLOT.right, PLOT.top, opt.bottom, "#e6e6e6", 1.5);
    hline(svg, opt.bottom, "#aaa", 2);
    if (opt.topLine) hline(svg, PLOT.top, "#e6e6e6", 2);

    // labels that are nearly off the axis
    opt.ghosts.forEach(g => {
        add(svg, "text", { x: g.x, y: g.y, "text-anchor": "middle", opacity: 0.12 }, g.label);
    });

    for (const name in opt.data) {
        poly(svg, rawFrom(opt.data[name]), opt.shift, RAW_COLORS[name], 2.5);
    }
    for (const name in opt.data) {
        poly(svg, opt.data[name], opt.shift, COLORS[name], 3.2);
    }

    // step selector
    add(svg, "line", {
        x1: PLOT.cursor, x2: PLOT.cursor, y1: PLOT.top, y2: opt.bottom,
        stroke: "#111", "stroke-width": 2.5, "stroke-dasharray": "6 4"
    });
    add(svg, "text", { x: opt.tailX, y: 421, "text-anchor": "middle" }, "0");
    const w = opt.badgeW;
    add(svg, "rect", { x: PLOT.cursor - w / 2 + opt.badgeDx, y: 404, width: w, height: 26, rx: 13, fill: "#d9d9d9" });
    add(svg, "text", { x: PLOT.cursor + opt.badgeDx, y: 423, "text-anchor": "middle" }, opt.badge);
}

drawChart("chart-accuracy", {
    data: ACCURACY,
    shift: -3,
    bottom: 399,
    xTicks: ["0", "10", "20", "30", "40", "50", "60", "70", "80", "90", ""],
    yTicks: [
        { y: 51, label: "80" }, { y: 138, label: "60" },
        { y: 225, label: "40" }, { y: 312, label: "20" }
    ],
    ghosts: [{ x: 113, y: 421, label: "0" }, { x: 91, y: 401, label: "0" }, { x: 2412, y: 421, label: "1" }],
    badge: "99 \u00d7",
    badgeW: 48,
    badgeDx: 0,
    tailX: 2242
});

drawChart("chart-loss", {
    data: LOSS,
    shift: -18,
    bottom: 398.7,
    topLine: true,
    xTicks: ["0", "200", "400", "600", "800", "1,000", "1,200", "1,400", "1,600", "1,800", ""],
    yTicks: [
        { y: 94.7, label: "3" }, { y: 181, label: "2" },
        { y: 268, label: "1" }, { y: 354.7, label: "0", zero: true }
    ],
    ghosts: [{ x: 116, y: 421, label: "0" }, { x: 93, y: 16, label: "4" }, { x: 2412, y: 421, label: "2,2" }],
    badge: "1980 \u00d7",
    badgeW: 67,
    badgeDx: -1,
    tailX: 2248
});
```
